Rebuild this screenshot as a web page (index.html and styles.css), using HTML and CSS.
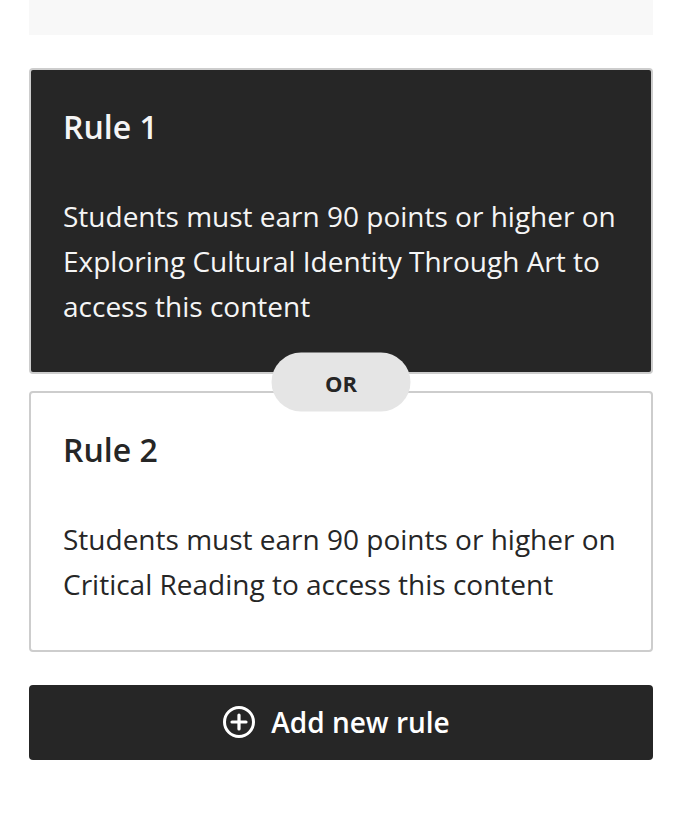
FILE: index.html
```html
<!DOCTYPE html>
<html>
<head>
<meta charset="utf-8">
<link rel="stylesheet" href="styles.css">
</head>
<body>
<div class="page">
  <div class="topbar"></div>
  <div class="rule rule-dark">
    <h2 class="rule-title">Rule 1</h2>
    <p class="rule-text">Students must earn 90 points or higher on Exploring Cultural Identity Through Art to access this content</p>
  </div>
  <div class="divider"><span class="or-pill">OR</span></div>
  <div class="rule rule-light">
    <h2 class="rule-title">Rule 2</h2>
    <p class="rule-text">Students must earn 90 points or higher on Critical Reading to access this content</p>
  </div>
  <button class="add-btn" type="button">
    <svg class="add-icon" width="34" height="34" viewBox="0 0 34 34" aria-hidden="true">
      <circle cx="17" cy="17" r="14.5" fill="none" stroke="#fff" stroke-width="3"/>
      <path d="M17 10v14M10 17h14" stroke="#fff" stroke-width="3.2" stroke-linecap="round"/>
    </svg>
    <span>Add new rule</span>
  </button>
</div>
</body>
</html>
```
FILE: styles.css
```css
html, body {
  margin: 0;
  padding: 0;
  background: #ffffff;
}
body {
  font-family: "Open Sans", "Noto Sans", sans-serif;
  color: #262626;
}
.page {
  padding: 0 29px;
  display: flex;
  flex-direction: column;
}
.topbar {
  height: 35px;
  background: #f8f8f8;
}
.rule {
  border: 2px solid #cdcdcd;
  border-radius: 4px;
  padding: 32px 32px 42.5px;
}
.rule-dark {
  margin-top: 33px;
  background: #262626;
  color: #f5f5f5;
}
.rule-light {
  background: #ffffff;
  color: #262626;
  padding-bottom: 43px;
}
.rule-title {
  margin: 0 0 42px;
  font-size: 32px;
  line-height: 50px;
  font-weight: 600;
}
.rule-text {
  margin: 0;
  font-size: 28px;
  line-height: 45px;
  font-weight: 400;
}
.divider {
  position: relative;
  height: 17px;
}
.or-pill {
  position: absolute;
  left: 50%;
  top: 50%;
  transform: translate(-50%, -50%);
  width: 139px;
  height: 59px;
  border-radius: 30px;
  background: #e5e5e5;
  display: flex;
  align-items: center;
  justify-content: center;
  font-size: 22px;
  font-weight: 700;
  color: #262626;
}
.add-btn {
  margin-top: 33px;
  height: 75px;
  border: none;
  border-radius: 4px;
  background: #262626;
  color: #ffffff;
  font-family: "Open Sans", "Noto Sans", sans-serif;
  font-size: 28px;
  font-weight: 600;
  display: flex;
  align-items: center;
  justify-content: center;
  gap: 15px;
  padding: 0 10px 0 0;
  cursor: pointer;
}
.add-icon {
  display: block;
  flex: none;
}
```
